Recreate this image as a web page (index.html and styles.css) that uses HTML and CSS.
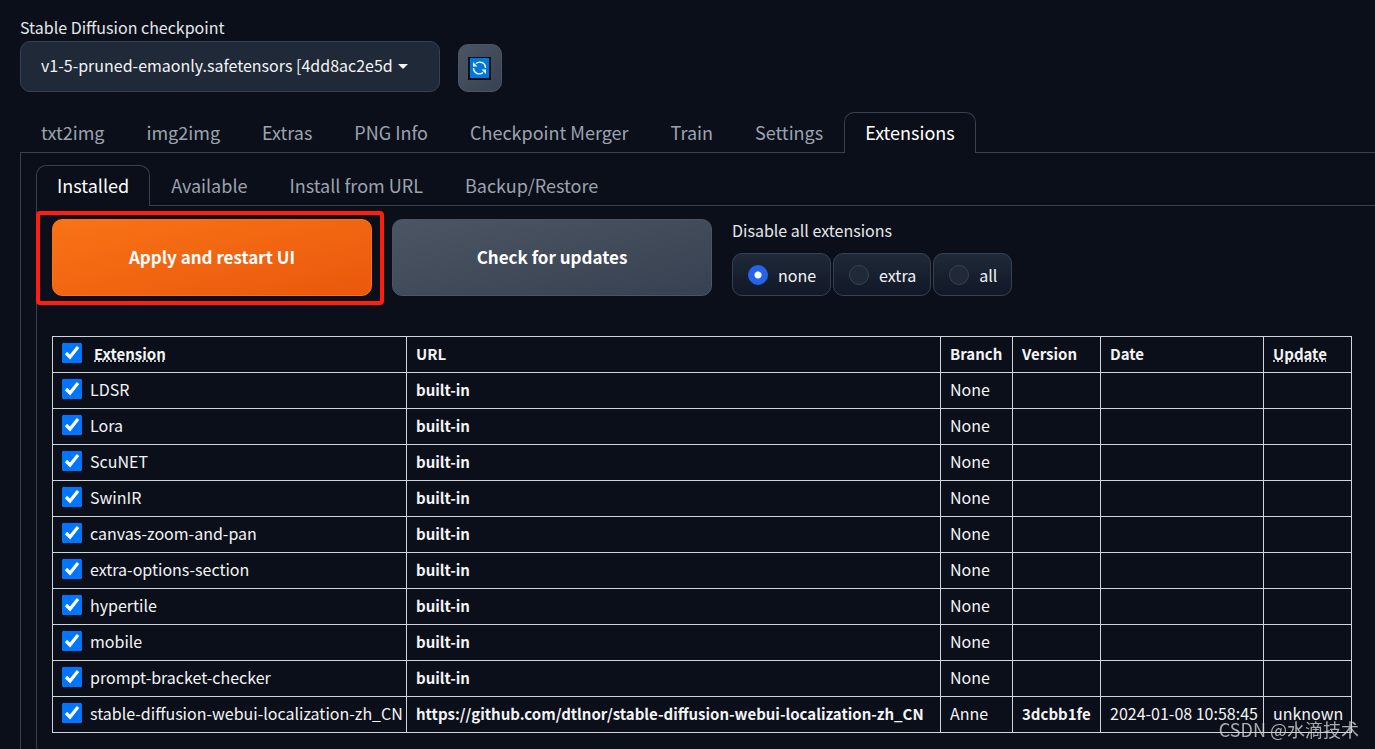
FILE: index.html
```html
<!DOCTYPE html>
<html lang="en">
<head>
<meta charset="utf-8">
<title>Stable Diffusion</title>
<link rel="stylesheet" href="styles.css">
</head>
<body>
<header class="quicksettings">
  <div class="field">
    <label for="checkpoint">Stable Diffusion checkpoint</label>
    <div class="dropdown">
      <select id="checkpoint"><option>v1-5-pruned-emaonly.safetensors [4dd8ac2e5d]</option></select>
      <svg class="caret" viewBox="0 0 10 5" aria-hidden="true"><path d="M0 0h10L5 5z"/></svg>
    </div>
  </div>
  <button class="refresh" aria-label="Refresh">
    <svg viewBox="0 0 23 23" aria-hidden="true">
      <path fill="#0b0f19" d="M0 0h23v23H0z"/><path fill="#0078d7" d="M2 1h19v20H2z"/>
      <g fill="none" stroke="#fff" stroke-width="1.4"><path d="M8 6.500a5.800 5.800 0 0 1 9.500 4.500"/><path d="M15 15.500a5.800 5.800 0 0 1-9.500-4.500"/></g>
      <path fill="#fff" d="M5 5v4.500h4.500zM18 17v-4.500h-4.500z"/>
    </svg>
  </button>
</header>
<main>
  <nav class="tabs">
    <button>txt2img</button><button>img2img</button><button>Extras</button><button>PNG Info</button><button>Checkpoint Merger</button><button>Train</button><button>Settings</button><button class="active">Extensions</button>
  </nav>
  <section class="panel outer">
    <nav class="tabs">
      <button class="active">Installed</button><button>Available</button><button>Install from URL</button><button>Backup/Restore</button>
    </nav>
    <section class="panel inner">
      <div class="actions">
        <div class="highlight"><button class="action primary">Apply and restart UI</button></div>
        <button class="action">Check for updates</button>
        <fieldset>
          <legend>Disable all extensions</legend>
          <div class="choices">
            <label><input type="radio" name="disable" checked>none</label>
            <label><input type="radio" name="disable">extra</label>
            <label><input type="radio" name="disable">all</label>
          </div>
        </fieldset>
      </div>
      <table>
        <colgroup><col class="c-name"><col class="c-url"><col class="c-branch"><col class="c-version"><col class="c-date"><col class="c-update"></colgroup>
        <thead><tr><th><div class="name"><input type="checkbox" checked aria-label="Select all"><abbr title="Use checkbox to enable the extension">Extension</abbr></div></th><th>URL</th><th>Branch</th><th>Version</th><th>Date</th><th><abbr title="Use checkbox to mark the extension for update">Update</abbr></th></tr></thead>
        <tbody>
          <tr><td><label class="name"><input type="checkbox" checked>LDSR</label></td><td><b>built-in</b></td><td>None</td><td></td><td></td><td></td></tr>
          <tr><td><label class="name"><input type="checkbox" checked>Lora</label></td><td><b>built-in</b></td><td>None</td><td></td><td></td><td></td></tr>
          <tr><td><label class="name"><input type="checkbox" checked>ScuNET</label></td><td><b>built-in</b></td><td>None</td><td></td><td></td><td></td></tr>
          <tr><td><label class="name"><input type="checkbox" checked>SwinIR</label></td><td><b>built-in</b></td><td>None</td><td></td><td></td><td></td></tr>
          <tr><td><label class="name"><input type="checkbox" checked>canvas-zoom-and-pan</label></td><td><b>built-in</b></td><td>None</td><td></td><td></td><td></td></tr>
          <tr><td><label class="name"><input type="checkbox" checked>extra-options-section</label></td><td><b>built-in</b></td><td>None</td><td></td><td></td><td></td></tr>
          <tr><td><label class="name"><input type="checkbox" checked>hypertile</label></td><td><b>built-in</b></td><td>None</td><td></td><td></td><td></td></tr>
          <tr><td><label class="name"><input type="checkbox" checked>mobile</label></td><td><b>built-in</b></td><td>None</td><td></td><td></td><td></td></tr>
          <tr><td><label class="name"><input type="checkbox" checked>prompt-bracket-checker</label></td><td><b>built-in</b></td><td>None</td><td></td><td></td><td></td></tr>
          <tr><td><label class="name"><input type="checkbox" checked>stable-diffusion-webui-localization-zh_CN</label></td><td><a href="https://github.com/dtlnor/stable-diffusion-webui-localization-zh_CN">https://github.com/dtlnor/stable-diffusion-webui-localization-zh_CN</a></td><td>Anne</td><td><a href="#version">3dcbb1fe</a></td><td>2024-01-08 10:58:45</td><td>unknown</td></tr>
        </tbody>
      </table>
    </section>
  </section>
</main>
<div class="watermark">CSDN @水滴技术</div>
</body>
</html>
```
FILE: styles.css
```css
* { box-sizing: border-box; }
html { height: 100%; overflow: hidden; }
body {
  margin: 0;
  padding: 15px 0 0 20px;
  background: #0b0f19;
  color: #f3f4f6;
  font: 16px/24px "Noto Sans CJK SC", sans-serif;
}
button, select { font: inherit; color: inherit; margin: 0; }
svg { display: block; }

.quicksettings { display: flex; align-items: flex-end; gap: 18px; margin-bottom: 20px; }
.field { width: 420px; }
.field > label { display: block; height: 26px; color: #e5e7eb; }
.dropdown { display: grid; align-items: center; }
.dropdown > * { grid-area: 1 / 1; }
.dropdown select {
  appearance: none;
  width: 100%;
  height: 51px;
  padding: 0 46px 3px 20px;
  border: 1px solid #374151;
  border-radius: 10px;
  background: #1f2937;
}
.caret { justify-self: end; width: 10px; height: 5px; margin-right: 32px; fill: #f3f4f6; }
.refresh {
  display: grid;
  place-items: center start;
  width: 44px;
  height: 48px;
  padding: 0 9px;
  border: 1px solid #4b5563;
  border-radius: 10px;
  background: linear-gradient(to bottom right, #4b5563, #374151);
}
.refresh svg { width: 23px; height: 23px; }

.tabs { display: flex; position: relative; margin-bottom: -1px; }
.tabs button {
  height: 41px;
  padding: 0 20px 2px;
  border: 1px solid transparent;
  border-bottom: 0;
  border-radius: 10px 10px 0 0;
  background: none;
  color: #9ca3af;
  font-size: 18px;
}
.tabs .active { border-color: #374151; background: #0b0f19; color: #fff; }
.panel { border: 1px solid #374151; border-right: 0; }
.outer { padding: 12px 0 16px 15px; }
.inner { padding: 13px 23px 22px 15px; border-radius: 0 0 0 10px; }

.actions { display: flex; gap: 20px; margin-bottom: 40px; }
.highlight { position: relative; }
.highlight::after {
  content: "";
  position: absolute;
  inset: -8px -12px -9px -16px;
  border: 4px solid #ff1e10;
  border-radius: 4px;
  pointer-events: none;
}
.action {
  width: 320px;
  height: 77px;
  padding: 0 0 1px;
  border: 1px solid #4b5563;
  border-radius: 10px;
  background: linear-gradient(to bottom right, #4b5563, #374151);
  color: #fff;
  font-size: 17px;
  font-weight: 700;
}
.primary { border-color: #f97316; background: linear-gradient(to bottom right, #f97316, #ea580c); }
fieldset { margin: 0; padding: 0; border: 0; }
legend { height: 24px; padding: 0; margin-bottom: 10px; line-height: 22px; color: #e5e7eb; }
.choices { display: flex; gap: 2px; }
.choices label {
  display: flex;
  align-items: center;
  gap: 10px;
  height: 43px;
  padding: 0 14px 0 15px;
  border: 1px solid #374151;
  border-radius: 10px;
  background: linear-gradient(#1f2937, #111827);
}
.choices input {
  appearance: none;
  width: 20px;
  height: 20px;
  margin: 0;
  border: 1px solid #374151;
  border-radius: 50%;
  background: #1f2937;
}
.choices input:checked { border-color: #2563eb; background: radial-gradient(circle, #fff 3px, #2563eb 4px); }

table { width: 100%; border-collapse: collapse; table-layout: fixed; }
.c-name { width: 354px; }
.c-url { width: 534px; }
.c-branch { width: 72px; }
.c-version { width: 88px; }
.c-date { width: 163px; }
.c-update { width: 88px; }
th, td { height: 36px; padding: 0 9px 3px; border: 1px solid #d1d5db; text-align: left; white-space: nowrap; }
th { padding-bottom: 1px; }
th, td b, td a { font-size: 15px; font-weight: 700; }
.name { display: flex; align-items: center; }
.name input { flex: none; width: 20px; height: 20px; margin: 0 8px 0 0; accent-color: #0075ff; }
th .name input { margin: 0 12px 2px 0; }
abbr { text-decoration: underline dotted; }
a { color: inherit; text-decoration: none; }

.watermark { position: fixed; right: 16px; bottom: 8px; color: rgba(210, 210, 210, .8); font-size: 18px; }
```
